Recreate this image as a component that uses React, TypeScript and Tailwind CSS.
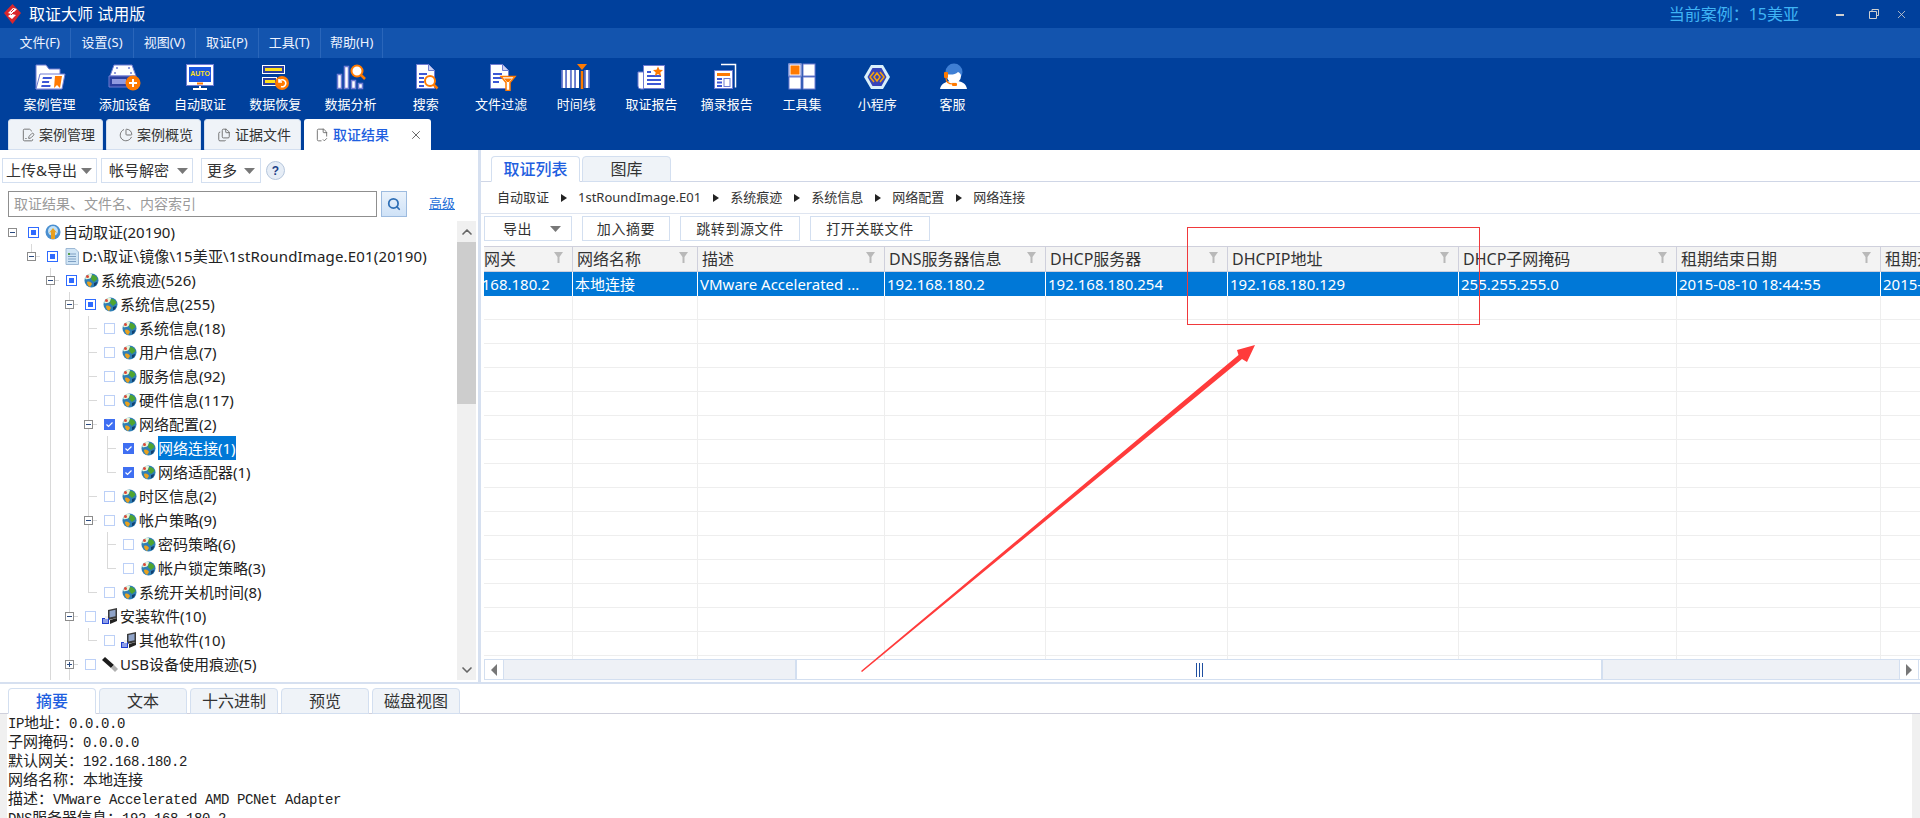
import { ChartPie, ChevronDown, ChevronUp, FileCheck2, FilePenLine, Files, Search, X } from "lucide-react";
import type { ReactNode } from "react";

const LAV = "#6f7cd2";
const BLUE = "#3c57d6";
const ORG = "#ff7a00";

function Svg({ children }: { children: ReactNode }) {
  return <svg width="34" height="28" viewBox="0 0 34 28">{children}</svg>;
}

const toolIcons: Record<string, ReactNode> = {
  folder: (
    <Svg>
      <path d="M3 2h10l3 4h11v20H3z" fill="#fff" stroke={LAV} />
      <path d="M7 11h25l-3 15H3z" fill="#fff" stroke={LAV} />
      <path d="M10 14h9l-.5 2h-9zM9.300 18h7l-.4 2h-7zM8.600 22h9l-.4 2h-9z" fill={BLUE} />
      <path d="M22 13h7l-2 12-3-3-3 3z" fill={ORG} />
    </Svg>
  ),
  device: (
    <Svg>
      <path d="M6 2h18l4 11H2z" fill="#fff" stroke={LAV} />
      <circle cx="9" cy="5" r="1" fill={LAV} /><circle cx="21" cy="5" r="1" fill={LAV} />
      <circle cx="7" cy="10" r="1" fill={LAV} /><circle cx="23" cy="10" r="1" fill={LAV} />
      <path d="M1 13h27v11H1z" fill="#2b3f9f" stroke={LAV} />
      <rect x="4" y="16" width="14" height="5" fill="#8f9ae0" />
      <circle cx="25" cy="20" r="7.500" fill={ORG} />
      <path d="M25 16v8M21 20h8" stroke="#fff" strokeWidth="2" />
    </Svg>
  ),
  auto: (
    <Svg>
      <rect x="3.500" y="1.500" width="27" height="21" fill="#fff" stroke={LAV} />
      <rect x="6" y="4" width="22" height="15" fill="#1a56e0" />
      <text x="17" y="13" textAnchor="middle" fontSize="7" fontWeight="700" fill="#ffe11a" fontFamily="Liberation Sans">AUTO</text>
      <rect x="14" y="19.500" width="6" height="2" fill={ORG} />
      <path d="M17 23v2M10 26h14" stroke="#fff" strokeWidth="2" />
    </Svg>
  ),
  recover: (
    <Svg>
      <rect x="4.500" y="2.500" width="22" height="8" fill="#2b3f9f" stroke="#fff" />
      <rect x="7" y="5" width="17" height="3" fill="#ffe11a" />
      <rect x="4.500" y="14.500" width="14" height="8" fill="#2b3f9f" stroke="#fff" />
      <rect x="7" y="17" width="10" height="3" fill="#ffe11a" />
      <circle cx="24" cy="20" r="7" fill={ORG} />
      <path d="M21 19a3.500 3.500 0 1 1 2 4.500M21 16v3h3" fill="none" stroke="#fff" strokeWidth="1.600" />
    </Svg>
  ),
  analysis: (
    <Svg>
      <rect x="3.500" y="11.500" width="4" height="14" fill="#fff" stroke={LAV} strokeWidth="1.500" />
      <rect x="10.500" y="3.500" width="4" height="22" fill="#fff" stroke={LAV} strokeWidth="1.500" />
      <rect x="17.500" y="17.500" width="4" height="8" fill="#fff" stroke={LAV} strokeWidth="1.500" />
      <rect x="24.500" y="20.500" width="4" height="5" fill="#fff" stroke={LAV} strokeWidth="1.500" />
      <circle cx="23" cy="8" r="5.500" fill="#fff" stroke={ORG} strokeWidth="2" />
      <path d="M27 12l4 4" stroke={ORG} strokeWidth="2.500" />
    </Svg>
  ),
  search: (
    <Svg>
      <path d="M7.500 1.500h12l6 6v18h-18z" fill="#fff" stroke={LAV} />
      <path d="M19.500 1.500v6h6" fill="#c9d0f2" stroke={LAV} />
      <path d="M10 11h8M10 15h5M10 19h5M10 23h5" stroke={BLUE} strokeWidth="2" />
      <circle cx="21" cy="18" r="5" fill="#fff" stroke={ORG} strokeWidth="2" />
      <path d="M24.500 21.500l4 4" stroke={ORG} strokeWidth="2.500" />
    </Svg>
  ),
  filter: (
    <Svg>
      <path d="M6.500 1.500h12l6 6v18h-18z" fill="#fff" stroke={LAV} />
      <path d="M18.500 1.500v6h6" fill="#c9d0f2" stroke={LAV} />
      <path d="M9 11h9M9 15h9M9 19h6" stroke={BLUE} strokeWidth="2" />
      <path d="M17 13.500h14l-5 6v8h-4v-8z" fill="#fff" stroke={ORG} strokeWidth="1.500" />
      <path d="M20 15.500h8l-3 3.500h-2z" fill={ORG} />
    </Svg>
  ),
  timeline: (
    <Svg>
      <path d="M5 7v18M9.500 7v18M14 7v18M18.500 7v18M28 7v18" stroke="#fff" strokeWidth="3" />
      <path d="M3 7v18M7.200 7v18M11.700 7v18M16.200 7v18M26 7v18M30 7v18" stroke={LAV} strokeWidth="1.500" />
      <path d="M23 8v18" stroke={ORG} strokeWidth="2.500" />
      <path d="M18 1h10l-5 6z" fill={ORG} />
    </Svg>
  ),
  report: (
    <Svg>
      <path d="M3 9h6v17H6a3 3 0 0 1-3-3z" fill="#fff" stroke={LAV} />
      <rect x="8.500" y="2.500" width="21" height="23" fill="#fff" stroke={LAV} />
      <path d="M12 9h4M12 13h14M12 17h14M12 21h14" stroke={BLUE} strokeWidth="2" />
      <path d="M23 3.500l1.500 3.300 3.500.3-2.700 2.300.9 3.500-3.200-2-3.200 2 .9-3.500-2.700-2.300 3.500-.3z" fill={ORG} />
    </Svg>
  ),
  excerpt: (
    <Svg>
      <path d="M11 1.500h14.500v23" fill="none" stroke="#fff" strokeWidth="1.500" />
      <rect x="4.500" y="7.500" width="18" height="18" fill="#fff" stroke={LAV} />
      <rect x="7" y="10" width="13" height="3" fill={ORG} />
      <path d="M7 16h5M7 19.500h5M7 23h5" stroke={BLUE} strokeWidth="2" />
      <rect x="14" y="15.500" width="6" height="8" fill="#fff" stroke={LAV} />
    </Svg>
  ),
  tools: (
    <Svg>
      <rect x="4.500" y="1.500" width="11" height="11" fill={ORG} stroke="#fff" strokeWidth="2" />
      <rect x="4" y="1" width="12" height="12" fill="none" stroke={LAV} />
      <rect x="18" y="1" width="12" height="12" fill="#fff" stroke={LAV} />
      <rect x="4" y="14" width="12" height="12" fill="#fff" stroke={LAV} />
      <rect x="18" y="14" width="12" height="12" fill="#fff" stroke={LAV} />
    </Svg>
  ),
  mini: (
    <Svg>
      <path d="M11 2h12l7 12-7 12H11L4 14z" fill="#d9f0fb" />
      <path d="M12.500 5h9l5 9-5 9h-9l-5-9z" fill="#3644b8" />
      <path d="M14 9l-4 5 4 5M20 9l4 5-4 5M17 10l-3 4 3 4 3-4z" fill="none" stroke="#f5a30c" strokeWidth="1.500" />
    </Svg>
  ),
  service: (
    <Svg>
      <circle cx="18" cy="9" r="8.500" fill="#3f7fd4" />
      <path d="M11 11c3 1 8 1 11-2 2 1 3 2 3 4a7 7 0 0 1-14 0z" fill="#fff" />
      <path d="M4 26c1-5 5-7 10-8l4 2 4-2c5 1 8 3 9 8z" fill="#fff" />
      <rect x="8" y="9" width="4" height="6" rx="1" fill={ORG} />
      <path d="M10 15c0 4 3 6 7 6" fill="none" stroke={ORG} strokeWidth="1.200" />
      <rect x="16" y="20" width="5" height="3" rx="1" fill={ORG} />
    </Svg>
  ),
};

const tools = [
  ["folder", "案例管理"], ["device", "添加设备"], ["auto", "自动取证"], ["recover", "数据恢复"],
  ["analysis", "数据分析"], ["search", "搜索"], ["filter", "文件过滤"], ["timeline", "时间线"],
  ["report", "取证报告"], ["excerpt", "摘录报告"], ["tools", "工具集"], ["mini", "小程序"], ["service", "客服"],
];

function Logo() {
  return (
    <svg width="17" height="20" viewBox="0 0 17 20">
      <path d="M8.500 0L17 9l-8.500 11L0 9z" fill="#d9262c" />
      <path d="M4 9l5-5 4 1-5 5 4 1-4 4-4-3 3-2z" fill="#fff" />
      <path d="M7 8l3-3M7 11l3-3" stroke="#d9262c" strokeWidth="1" />
    </svg>
  );
}

function Globe() {
  return (
    <svg width="16" height="16" viewBox="0 0 16 16" className="shrink-0">
      <circle cx="8.500" cy="8.500" r="7" fill="#2f7fb5" />
      <path d="M2 6c2-4 5-5 7-4 0 3-2 5-4 5s-2 1-3-1z" fill="#e8f4d8" />
      <path d="M9 3c3 0 5 2 5.500 4L11 10 8 7z" fill="#4fa52f" />
      <path d="M4 10c2-1 4 0 5 2l-2 3c-2-1-3-3-3-5z" fill="#e9a21f" />
      <path d="M11 11l3-1c0 2-1 4-3 4z" fill="#123f70" />
      <circle cx="4.500" cy="4.500" r="1.500" fill="#d8483a" />
    </svg>
  );
}

function RootIcon() {
  return (
    <svg width="16" height="16" viewBox="0 0 16 16" className="shrink-0">
      <circle cx="8" cy="8" r="7.500" fill="#4a8fd0" />
      <circle cx="8" cy="7" r="5" fill="#bfe0f7" />
      <path d="M6 15V8L4 9l4-5 4 5-2-1v7z" fill="#e8a020" />
    </svg>
  );
}

function DocIcon() {
  return (
    <svg width="14" height="17" viewBox="0 0 14 17" className="shrink-0">
      <path d="M1 .500h9l3.500 3.500v12.500H1z" fill="#cfe4f5" stroke="#9db8d4" />
      <path d="M3 6h8M3 8.500h8M3 11h8M3 13.500h8" stroke="#7ea0c4" />
      <rect x="3" y="5" width="2" height="2" fill="#5aa04a" />
    </svg>
  );
}

function SoftIcon() {
  return (
    <svg width="17" height="17" viewBox="0 0 17 17" className="shrink-0">
      <path d="M6 2l9-2v10l-9 2z" fill="#3a3a3a" />
      <path d="M7.500 3l6-1.300v6.500l-6 1.300z" fill="#8fa3c8" />
      <path d="M0 10h7v6H0z" fill="#1f3fd0" />
      <path d="M1 12h5M1 14h5" stroke="#fff" />
      <path d="M8 12l7-2v3l-7 3z" fill="#222" />
      <rect x="3" y="8" width="3" height="3" fill="#f0f0f0" />
    </svg>
  );
}

function UsbIcon() {
  return (
    <svg width="16" height="15" viewBox="0 0 16 15" className="shrink-0">
      <path d="M0 3l3-3 9 8-3 3z" fill="#1c1c1c" />
      <path d="M9 11l3-3 4 4-3 3z" fill="#b0b0b0" />
    </svg>
  );
}

function Expander({ open }: { open: boolean }) {
  return (
    <svg width="9" height="9" viewBox="0 0 9 9" className="relative shrink-0">
      <rect x=".500" y=".500" width="8" height="8" fill="#fff" stroke="#8c8c8c" />
      <path d="M2 4.500h5" stroke="#2a4a80" />
      {!open && <path d="M4.500 2v5" stroke="#2a4a80" />}
    </svg>
  );
}

function Check({ state }: { state: number }) {
  if (state === 2) {
    return (
      <svg width="11" height="11" viewBox="0 0 11 11" className="shrink-0">
        <rect width="11" height="11" fill="#3f6ff2" />
        <path d="M2.500 5.500l2 2 4-4" fill="none" stroke="#fff" strokeWidth="1.200" />
      </svg>
    );
  }
  if (state === 1) {
    return (
      <span className="flex h-[11px] w-[11px] shrink-0 items-center justify-center border border-[#2f6bff] bg-white">
        <span className="h-[5px] w-[5px] bg-[#2f6bff]" />
      </span>
    );
  }
  return <span className="h-[11px] w-[11px] shrink-0 border border-[#bcd0f7] bg-white" />;
}

type Row = { l: number; t: string; c: number; i?: string; e?: string; last?: boolean; root?: boolean; pass: number[]; sel?: boolean };

const rows: Row[] = [
  { l: 0, t: "自动取证(20190)", c: 1, i: "root", e: "-", root: true, pass: [] },
  { l: 1, t: "D:\\取证\\镜像\\15美亚\\1stRoundImage.E01(20190)", c: 1, i: "doc", e: "-", last: true, pass: [] },
  { l: 2, t: "系统痕迹(526)", c: 1, e: "-", pass: [] },
  { l: 3, t: "系统信息(255)", c: 1, e: "-", pass: [50] },
  { l: 4, t: "系统信息(18)", c: 0, pass: [50, 69] },
  { l: 4, t: "用户信息(7)", c: 0, pass: [50, 69] },
  { l: 4, t: "服务信息(92)", c: 0, pass: [50, 69] },
  { l: 4, t: "硬件信息(117)", c: 0, pass: [50, 69] },
  { l: 4, t: "网络配置(2)", c: 2, e: "-", pass: [50, 69] },
  { l: 5, t: "网络连接(1)", c: 2, pass: [50, 69, 88], sel: true },
  { l: 5, t: "网络适配器(1)", c: 2, last: true, pass: [50, 69, 88] },
  { l: 4, t: "时区信息(2)", c: 0, pass: [50, 69] },
  { l: 4, t: "帐户策略(9)", c: 0, e: "-", pass: [50, 69] },
  { l: 5, t: "密码策略(6)", c: 0, pass: [50, 69, 88] },
  { l: 5, t: "帐户锁定策略(3)", c: 0, last: true, pass: [50, 69, 88] },
  { l: 4, t: "系统开关机时间(8)", c: 0, last: true, pass: [50, 69] },
  { l: 3, t: "安装软件(10)", c: 0, i: "soft", e: "-", pass: [50] },
  { l: 4, t: "其他软件(10)", c: 0, i: "soft", last: true, pass: [50, 69] },
  { l: 3, t: "USB设备使用痕迹(5)", c: 0, i: "usb", e: "+", pass: [50] },
];

function TreeRow({ r }: { r: Row }) {
  const x = 12 + 19 * r.l;
  return (
    <div className="relative flex h-6 shrink-0 items-center text-[15px] whitespace-nowrap text-[#222]" style={{ paddingLeft: 8 + 19 * r.l }}>
      {r.pass.map((p) => (
        <span key={p} className="absolute top-0 bottom-0 w-px bg-[#d9d9d9]" style={{ left: p }} />
      ))}
      {!r.root && (
        <>
          <span className={`absolute top-0 w-px bg-[#d9d9d9] ${r.last ? "h-3" : "h-6"}`} style={{ left: x }} />
          <span className="absolute top-3 h-px w-[9px] bg-[#d9d9d9]" style={{ left: x }} />
        </>
      )}
      {r.e ? <Expander open={r.e === "-"} /> : <span className="w-[9px] shrink-0" />}
      <span className="ml-[11px] flex shrink-0"><Check state={r.c} /></span>
      <span className="ml-[6px] flex w-4 shrink-0 items-center justify-center">
        {r.i === "root" ? <RootIcon /> : r.i === "doc" ? <DocIcon /> : r.i === "soft" ? <SoftIcon /> : r.i === "usb" ? <UsbIcon /> : <Globe />}
      </span>
      <span className={`ml-[2px] leading-6 ${r.sel ? "bg-[#0078d7] text-white" : ""} ${r.i === "doc" ? "tracking-[0.17px]" : ""}`}>{r.t}</span>
    </div>
  );
}

function Caret() {
  return (
    <svg width="11" height="6" viewBox="0 0 11 6" className="shrink-0">
      <path d="M0 0h11L5.500 6z" fill="#787878" />
    </svg>
  );
}

function Funnel() {
  return (
    <svg width="9" height="11" viewBox="0 0 9 11" className="shrink-0">
      <path d="M0 0h9L5.500 5v6h-2V5z" fill="#b9b9b9" />
    </svg>
  );
}

const colGrid = "grid grid-cols-[89px_125px_187px_161px_182px_231px_218px_204px_39px]";

const headers = ["网关", "网络名称", "描述", "DNS服务器信息", "DHCP服务器", "DHCPIP地址", "DHCP子网掩码", "租期结束日期", "租期开始日期"];
const values = ["192.168.180.2", "本地连接", "VMware Accelerated ...", "192.168.180.2", "192.168.180.254", "192.168.180.129", "255.255.255.0", "2015-08-10 18:44:55", "2015-08-09 18:44:55"];

const crumbs = ["自动取证", "1stRoundImage.E01", "系统痕迹", "系统信息", "网络配置", "网络连接"];

const summary = [
  "IP地址：0.0.0.0",
  "子网掩码：0.0.0.0",
  "默认网关：192.168.180.2",
  "网络名称：本地连接",
  "描述：VMware Accelerated AMD PCNet Adapter",
  "DNS服务器信息：192.168.180.2",
];

function MonoLine({ text }: { text: string }) {
  const parts = text.split(/([\x20-\x7e]+)/).filter(Boolean);
  return (
    <div className="h-[19px] text-[15px] leading-[19px] whitespace-pre text-[#222]">
      {parts.map((p, i) =>
        /^[\x20-\x7e]+$/.test(p) ? (
          <span key={i} className="font-['Liberation_Mono',monospace] text-[14px] tracking-[-0.4px]">{p}</span>
        ) : (
          <span key={i}>{p}</span>
        ),
      )}
    </div>
  );
}

function BottomTab({ label, active }: { label: string; active?: boolean }) {
  return (
    <div className={`-mb-px flex h-[26px] w-[88px] items-center justify-center rounded-t-[4px] border border-[#d3dff0] text-[16px] ${active ? "border-b-white bg-white font-medium text-[#1f5fe0]" : "bg-[#eff3f8] text-[#333]"}`}>
      {label}
    </div>
  );
}

export default function App() {
  return (
    <div className="relative flex h-[818px] w-[1920px] flex-col overflow-hidden bg-white font-['Noto_Sans','Noto_Sans_CJK_SC',sans-serif]">
      <div className="flex h-[28px] shrink-0 items-center bg-[#00409c] pl-1 text-white">
        <Logo />
        <span className="ml-2 text-[16px]">取证大师 试用版</span>
        <span className="ml-auto text-[16px] text-[#3fb4f5]">当前案例：15美亚</span>
        <div className="ml-[37px] flex w-[84px] items-center text-[#d0d0d0]">
          <span className="h-[2px] w-2 translate-y-[1px] bg-[#d0d0d0]" />
          <svg width="10" height="10" viewBox="0 0 10 10" className="ml-[25px]">
            <path d="M3 2.500V.500h6.500v6H7.500M.500 2.500h7v7h-7z" fill="none" stroke="#d0d0d0" />
          </svg>
          <X className="ml-4 h-[13px] w-[13px]" strokeWidth={1.5} />
        </div>
      </div>

      <div className="flex h-[30px] shrink-0 items-center bg-[#1354ae] pl-[9px] text-[13px] text-[#eef3ff]">
        {["文件(F)", "设置(S)", "视图(V)", "取证(P)", "工具(T)", "帮助(H)"].map((m) => (
          <div key={m} className="flex h-full w-[62.400px] items-center justify-center border-r border-[#2a66ba]">{m}</div>
        ))}
      </div>

      <div className="flex h-[61px] shrink-0 bg-[#00409c] pt-[5px] pl-3">
        {tools.map(([icon, label]) => (
          <div key={label} className="flex w-[75.250px] flex-col items-center text-[13px] text-white">
            <div className="h-[29px]">{toolIcons[icon]}</div>
            <div className="mt-[2px] leading-[20px]">{label}</div>
          </div>
        ))}
      </div>

      <div className="flex h-[31px] shrink-0 items-end gap-[3px] bg-[#00409c] pl-2 text-[14px] text-[#333]">
        <div className="flex h-[31px] w-[95px] items-center gap-1 rounded-t-[3px] border border-[#d3dff0] bg-[#eff3f8] pl-3">
          <FilePenLine className="h-[14px] w-[14px] text-[#666]" strokeWidth={1.5} />案例管理
        </div>
        <div className="flex h-[31px] w-[95px] items-center gap-1 rounded-t-[3px] border border-[#d3dff0] bg-[#eff3f8] pl-3">
          <ChartPie className="h-[14px] w-[14px] text-[#666]" strokeWidth={1.5} />案例概览
        </div>
        <div className="flex h-[31px] w-[97px] items-center gap-1 rounded-t-[3px] border border-[#d3dff0] bg-[#eff3f8] pl-3">
          <Files className="h-[14px] w-[14px] text-[#666]" strokeWidth={1.5} />证据文件
        </div>
        <div className="flex h-[31px] w-[127px] items-center gap-1 rounded-t-[3px] bg-white pl-[11px] font-medium text-[#1f5fe0]">
          <FileCheck2 className="h-[14px] w-[14px] text-[#666]" strokeWidth={1.5} />取证结果
          <X className="ml-4 h-[14px] w-[14px] text-[#555]" strokeWidth={1.5} />
        </div>
      </div>

      <div className="flex h-[532px] shrink-0">
        <div className="flex w-[478px] shrink-0 flex-col pt-2">
          <div className="flex h-[25px] shrink-0 items-center pl-[2px] text-[15px] text-[#333]">
            <div className="flex h-full w-[95px] items-center gap-1 border border-[#d3dff0] pl-[3px]">上传&amp;导出<Caret /></div>
            <div className="ml-1 flex h-full w-[92px] items-center gap-2 border border-[#d3dff0] pl-[7px]">帐号解密<Caret /></div>
            <div className="ml-2 flex h-full w-[60px] items-center gap-[7px] border border-[#d3dff0] pl-[5px]">更多<Caret /></div>
            <div className="ml-[5px] flex h-[19px] w-[19px] items-center justify-center rounded-full border border-[#b5c6dc] bg-[#e6edf6] font-['Liberation_Sans',sans-serif] text-[12px] font-bold text-[#1c3f86]">?</div>
          </div>
          <div className="mt-[7px] flex h-[27px] shrink-0 items-center pl-2">
            <div className="flex h-[26px] w-[369px] items-center border border-[#8f8f8f] pl-[5px] text-[14px] text-[#9a9a9a]">取证结果、文件名、内容索引</div>
            <div className="ml-1 flex h-[26px] w-[26px] items-center justify-center border border-[#9dbbdf] bg-gradient-to-b from-[#eaf2fb] to-[#cfe2f7]">
              <Search className="h-[14px] w-[14px] text-[#2f6fb5]" strokeWidth={3} />
            </div>
            <span className="ml-[22px] text-[13px] text-[#1f6fd8] underline">高级</span>
          </div>
          <div className="mt-[3px] flex min-h-0 flex-1 pb-[2px]">
            <div className="flex min-w-0 flex-1 flex-col overflow-hidden">
              {rows.map((r) => <TreeRow key={r.t + r.l} r={r} />)}
              <div className="relative h-6 shrink-0">
                <span className="absolute top-0 bottom-0 left-[50px] w-px bg-[#d9d9d9]" />
                <span className="absolute top-0 bottom-0 left-[69px] w-px bg-[#d9d9d9]" />
              </div>
            </div>
            <div className="mt-px mr-[2px] flex w-[19px] shrink-0 flex-col bg-[#f0f0f0]">
              <div className="flex h-[21px] items-center justify-center"><ChevronUp className="h-4 w-4 text-[#666]" strokeWidth={2.5} /></div>
              <div className="h-[162px] bg-[#cdcdcd]" />
              <div className="mt-auto flex h-5 items-center justify-center"><ChevronDown className="h-4 w-4 text-[#666]" strokeWidth={2.5} /></div>
            </div>
          </div>
        </div>

        <div className="w-[3px] shrink-0 bg-[#d6e0f0]" />

        <div className="flex min-w-0 flex-1 flex-col">
          <div className="flex h-[32px] shrink-0 items-end gap-[2px] border-b border-[#cfd6e6] pl-[10px] text-[16px]">
            <div className="-mb-px flex h-[26px] w-[89px] items-center justify-center rounded-t-[4px] border border-[#d3dff0] border-b-white bg-white font-medium text-[#1f5fe0]">取证列表</div>
            <div className="-mb-px flex h-[26px] w-[89px] items-center justify-center rounded-t-[4px] border border-[#d3dff0] bg-[#eff3f8] text-[#333]">图库</div>
          </div>
          <div className="flex h-[32px] shrink-0 items-center border-b border-[#dfe5f0] pl-4 text-[13px] text-[#333]">
            {crumbs.map((c, i) => (
              <span key={c} className="flex items-center">
                {i > 0 && <span className="mx-[11.500px] h-0 w-0 border-y-[4.500px] border-l-[6px] border-y-transparent border-l-[#222]" />}
                {c}
              </span>
            ))}
          </div>
          <div className="mt-[2px] flex h-[25px] shrink-0 gap-[10px] pl-[3px] text-[14px] tracking-[0.6px] text-[#333]">
            <div className="flex w-[88px] items-center gap-[18px] border border-[#d3dff0] pl-[18px]">导出<Caret /></div>
            <div className="flex w-[88px] items-center justify-center border border-[#d3dff0]">加入摘要</div>
            <div className="flex w-[120px] items-center justify-center border border-[#d3dff0]">跳转到源文件</div>
            <div className="flex w-[120px] items-center justify-center border border-[#d3dff0]">打开关联文件</div>
          </div>
          <div className="mt-[5px] flex min-h-0 flex-1 flex-col overflow-hidden pl-[3px]">
            <div className={`${colGrid} h-[26px] shrink-0 border-y border-[#cfd0dc] bg-[#f3f3f3] text-[16px] text-[#333]`}>
              {headers.map((h) => (
                <div key={h} className="flex items-center justify-between overflow-hidden border-r border-[#cfd0dc] pr-[9px] pl-1 whitespace-nowrap first:pl-0 last:justify-start last:border-r-0">
                  {h}
                  <span className="mb-1"><Funnel /></span>
                </div>
              ))}
            </div>
            <div className="min-h-0 flex-1 overflow-hidden">
              <div className={`${colGrid} h-[24px] bg-[#0078d7] text-[15px] text-white`}>
                {values.map((v, i) => (
                  <div key={i} className="flex items-center overflow-hidden border-r border-white pl-[2px] whitespace-nowrap last:border-r-0">
                    <span className={i === 0 ? "-ml-[34px]" : ""}>{v}</span>
                  </div>
                ))}
              </div>
              {Array.from({ length: 16 }).map((_, i) => (
                <div key={i} className={`${colGrid} h-[24px] border-b border-[#eeeeee]`}>
                  {headers.map((h) => <div key={h} className="border-r border-[#eeeeee] last:border-r-0" />)}
                </div>
              ))}
            </div>
            <div className="flex h-[21px] shrink-0 border-y border-[#d3dff0]">
              <div className="flex w-5 items-center justify-center border-x border-[#d3dff0]">
                <span className="h-0 w-0 border-y-[6px] border-r-[6px] border-y-transparent border-r-[#777]" />
              </div>
              <div className="flex-1 bg-[#eef1f6]" />
              <div className="flex w-[808px] items-center justify-center border-x-2 border-[#d3dff0] bg-white">
                <span className="flex h-[14px] w-[7px] justify-between">
                  <span className="w-px bg-[#1f4fa0]" /><span className="w-px bg-[#1f4fa0]" /><span className="w-px bg-[#1f4fa0]" />
                </span>
              </div>
              <div className="w-[296px] bg-[#eef1f6]" />
              <div className="mr-px flex w-5 items-center justify-center border-x border-[#d3dff0]">
                <span className="h-0 w-0 border-y-[6px] border-l-[6px] border-y-transparent border-l-[#777]" />
              </div>
            </div>
            <div className="h-[2px] shrink-0" />
          </div>
        </div>
      </div>

      <div className="h-[2px] shrink-0 bg-[#d6e0f0]" />

      <div className="flex min-h-0 flex-1 flex-col">
        <div className="flex h-[30px] shrink-0 items-end gap-[3px] border-b border-[#cfd0dc] pl-2">
          <BottomTab label="摘要" active />
          <BottomTab label="文本" />
          <BottomTab label="十六进制" />
          <BottomTab label="预览" />
          <BottomTab label="磁盘视图" />
        </div>
        <div className="flex min-h-0 flex-1">
          <div className="w-[7px] shrink-0 bg-[#f0f0f0]" />
          <div className="-mt-px min-w-0 flex-1 overflow-hidden pl-px">
            {summary.map((s) => <MonoLine key={s} text={s} />)}
          </div>
          <div className="w-2 shrink-0 bg-[#f0f0f0]" />
        </div>
      </div>

      <div className="pointer-events-none absolute top-[227px] left-[1187px] h-[98px] w-[293px] border border-[#f0393b]" />
      <svg className="pointer-events-none absolute top-0 left-0" width="1920" height="818" viewBox="0 0 1920 818">
        <path d="M861 671L1238.500 355L1237 350L1255 345L1247 362L1242 359L862 672Z" fill="#ff3b3b" />
      </svg>
    </div>
  );
}
